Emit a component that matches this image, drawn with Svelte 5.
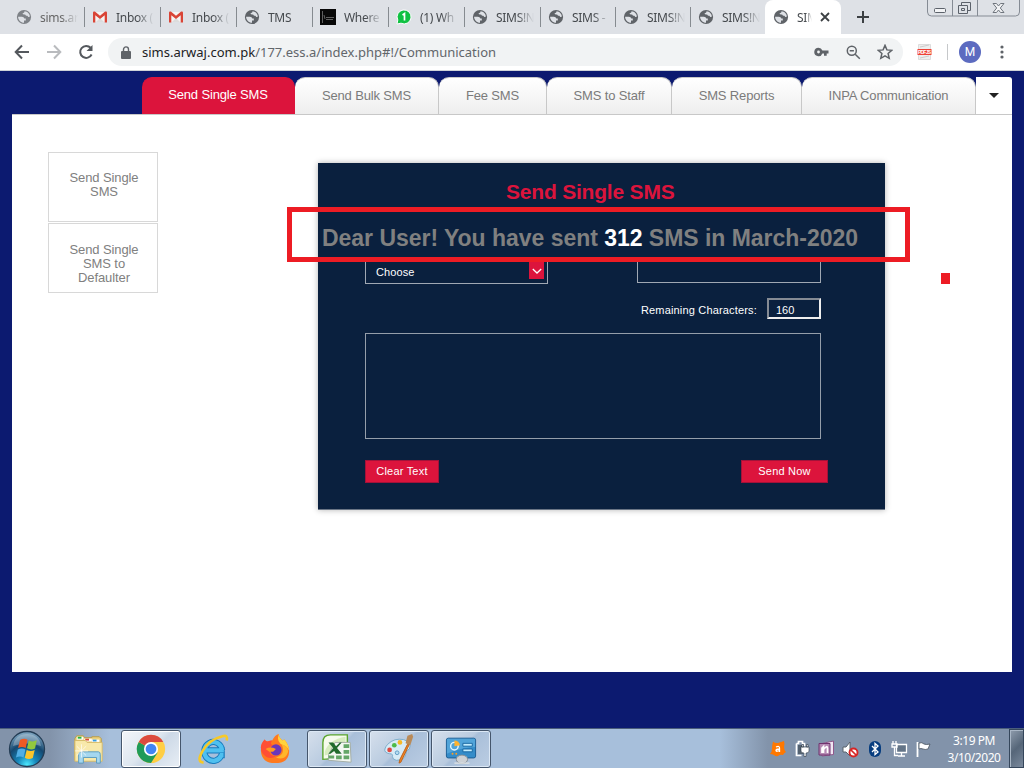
<script>
  const browserTabs = [
    { icon: 'globe', label: 'sims.ar', faded: true },
    { icon: 'gmail', label: 'Inbox (' },
    { icon: 'gmail', label: 'Inbox (' },
    { icon: 'globe', label: 'TMS' },
    { icon: 'photo', label: 'Where' },
    { icon: 'whatsapp', label: '(1) Wh' },
    { icon: 'globe', label: 'SIMS!N' },
    { icon: 'globe', label: 'SIMS -' },
    { icon: 'globe', label: 'SIMS!N' },
    { icon: 'globe', label: 'SIMS!N' },
    { icon: 'globe', label: 'SIM', active: true }
  ];
  const sections = [
    { label: 'Send Single SMS', width: 153, active: true },
    { label: 'Send Bulk SMS', width: 144 },
    { label: 'Fee SMS', width: 108 },
    { label: 'SMS to Staff', width: 125 },
    { label: 'SMS Reports', width: 130 },
    { label: 'INPA Communication', width: 174 }
  ];
</script>

{#snippet favicon(kind)}
  <svg class="fav" viewBox="0 0 16 16">
    {#if kind === 'globe'}
      <circle cx="8" cy="8" r="7.1" fill="#5f6368" />
      <path d="M8.6 2.2c2.9.2 5.1 2.5 5.3 5.4-.8.5-1.6.4-2-.2-.3-.7-.8-.7-1.5-.7-.8 0-.8-.9-1.4-1.1-.8-.2-1.8.2-2.3-.5-.4-.8.5-1.1 1.1-1.3.7-.2.4-1 .8-1.6z" fill="#dee1e6" />
      <path d="M2.1 7.7h3.7c1.4 0 2.4.8 2.5 1.9h1.5v1.8H8v2.3c-3.2 0-5.9-2.7-5.9-6z" fill="#dee1e6" />
    {:else if kind === 'gmail'}
      <path d="M2 3h12v10H2z" fill="#f5f3f2" />
      <path d="M4 13 8 9l4 4z" fill="#dcdcdc" />
      <path d="M1 3.8C1 2.4 2.3 2 3.2 2.8L8 6.8l4.800-4C13.7 2 15 2.400 15 3.800V13.500h-2.300V6.200L8 10.100 3.300 6.200v7.300H1z" fill="#d94436" />
    {:else if kind === 'photo'}
      <path d="M0 0h16v16H0z" fill="#080808" />
      <path d="M2.500 2v12M4 6l1 4M6 8.500h8M6 10.500h7" stroke="#777" stroke-width=".8" fill="none" />
    {:else}
      <path d="m1 15 .8-4A7 7 0 1 1 5 14.200z" fill="#10c143" stroke="#fff" stroke-width="1" />
      <path d="M6.500 6 8.500 4.600v7" fill="none" stroke="#fff" stroke-width="1.700" />
    {/if}
  </svg>
{/snippet}

<div class="screen">
  <header class="strip">
    <div class="tabs">
      {#each browserTabs as tab, i}
        <div class="tab" class:narrow={i > 6} class:active={tab.active} class:nosep={i === 9} class:dim={tab.faded}>
          {@render favicon(tab.icon)}
          <span class="tab-label">{tab.label}</span>
          {#if tab.active}
            <svg class="close" viewBox="0 0 10 10"><path d="m1 1 8 8M9 1 1 9" stroke="#3c4043" stroke-width="1.800" /></svg>
          {/if}
        </div>
      {/each}
    </div>
    <svg class="plus" viewBox="0 0 12 12"><path d="M6 0v12M0 6h12" stroke="#3c4043" stroke-width="2" /></svg>
    <svg class="winbtns" viewBox="0 0 94 18" fill="none">
      <path d="M.5 0v12q0 4 4 4h84q4 0 4-4V0M25.500 0v16M50.500 0v16" stroke="#858b94" />
      <rect x="7.500" y="8.500" width="11" height="4" rx="1" stroke="#5c626b" fill="#f2f3f5" />
      <path d="M34.500 2.500h9v8h-3M34.500 5V2.500M31.500 5.500h9v8h-9zM34.500 8.500h3v2h-3z" stroke="#5c626b" />
      <path d="M66 3.500h3.500l2 2.500 2-2.500H77l-3.700 4.500L77 12.500h-3.500l-2-2.500-2 2.500H66L69.700 8z" stroke="#70767e" fill="#f2f3f5" />
    </svg>
  </header>

  <div class="toolbar">
    <svg class="navico" viewBox="0 0 16 16"><path d="M15 8H2M8 1.500 1.700 8 8 14.500" /></svg>
    <svg class="navico off" viewBox="0 0 16 16"><path d="M1 8h13M8 1.500 14.300 8 8 14.500" /></svg>
    <svg class="navico" viewBox="0 0 16 16"><path d="M13.600 10.500A6 6 0 1 1 12.600 3.800" /><path d="M14.500 1v6h-6z" class="fill" /></svg>
    <div class="omnibox">
      <svg class="lock" viewBox="0 0 10 13"><path d="M1 5h8q1 0 1 1v6q0 1-1 1H1q-1 0-1-1V6q0-1 1-1z" fill="#5f6368" /><path d="M2.500 5V3.400a2.500 2.500 0 0 1 5 0V5" fill="none" stroke="#5f6368" stroke-width="1.400" /></svg>
      <span class="url">sims.arwaj.com.pk<span>/177.ess.a/index.php#!/Communication</span></span>
      <svg class="key" viewBox="0 0 15 10"><path d="M4.500.8a4.200 4.200 0 1 0 3.900 5.700H10v2.300h2.700V6.500H14.500V3.500H8.400A4.200 4.200 0 0 0 4.500.8zm0 2.800a1.400 1.400 0 1 1 0 2.800 1.400 1.400 0 0 1 0-2.800z" fill="#5f6368" fill-rule="evenodd" /></svg>
      <svg class="mag" viewBox="0 0 15 15"><circle cx="5.800" cy="5.800" r="4.500" /><path d="m9.200 9.200 4.600 4.600M3.700 5.800h4.200" /></svg>
      <svg class="star" viewBox="0 0 16 16"><path d="m8 1.400 1.900 4.500 4.900.4-3.700 3.200 1.100 4.800L8 11.800l-4.200 2.500 1.100-4.800-3.700-3.200 4.900-.4z" /></svg>
    </div>
    <svg class="pdf" viewBox="0 0 16 16">
      <path d="M1.500.5h12v15h-12z" fill="#eee" stroke="#ddd" /><path d="m3 3 9-2M3 14l9-2" stroke="#ccc" />
      <path d="M.5 5h14v6H.5z" fill="#ef4136" />
      <text x="1" y="9.800" font-size="5" font-weight="bold" fill="#fff" textLength="13" font-family="Liberation Sans, sans-serif">PDF JS</text>
    </svg>
    <i class="bar"></i>
    <span class="avatar">M</span>
    <svg class="dots" viewBox="0 0 4 14" fill="#5f6368"><circle cx="2" cy="2" r="1.600" /><circle cx="2" cy="7" r="1.600" /><circle cx="2" cy="12" r="1.600" /></svg>
  </div>

  <main>
    <nav>
      {#each sections as s}
        <div class="section" class:current={s.active} style:width="{s.width}px"><span>{s.label}</span></div>
      {/each}
      <div class="more"><i></i></div>
    </nav>
    <div class="content">
      <aside>
        <div class="side">Send Single<br />SMS</div>
        <div class="side">Send Single<br />SMS to<br />Defaulter</div>
      </aside>
      <section class="card">
        <h2>Send Single SMS</h2>
        <p class="count">Dear User! You have sent <b>312</b> SMS in March-2020</p>
        <div class="fields">
          <div class="select"><span>Choose</span><i><svg viewBox="0 0 10 6"><path d="m.8 1 4.200 4 4.200-4" fill="none" stroke="#fff" stroke-width="1.300" /></svg></i></div>
          <div class="input"></div>
        </div>
        <div class="remain"><span>Remaining Characters:</span><div class="num">160</div></div>
        <div class="message"></div>
        <div class="actions"><div class="btn clear">Clear Text</div><div class="btn send">Send Now</div></div>
        <div class="highlight"></div>
      </section>
    </div>
    <div class="mark"></div>
  </main>

  <footer>
    <svg class="orb" viewBox="0 0 38 38">
      <defs>
        <radialGradient id="orb" cx=".5" cy=".95" r=".9"><stop offset="0" stop-color="#4deaff" /><stop offset=".3" stop-color="#1788bc" /><stop offset=".65" stop-color="#154870" /><stop offset="1" stop-color="#79a1bd" /></radialGradient>
      </defs>
      <circle cx="19" cy="19" r="17.500" fill="url(#orb)" stroke="#243d55" stroke-width="1.300" />
      <path d="M5 16Q7 4 19 4t14 12q-14-5-28 0z" fill="#fff" opacity=".28" />
      <path d="M12 10q4-2.500 7.500-.3L17.700 18q-3.700-2-7.600 0z" fill="#ee5a24" />
      <path d="M20.800 10.500q4 2 8-.2L27 18.400q-4 2-8-.1z" fill="#91c83e" />
      <path d="M9.800 19.500q4-2 7.600-.1l-1.900 8q-3.700-1.800-7.500.2z" fill="#50aee5" />
      <path d="M18.700 20q4 2 8 0l-1.900 7.900q-4 2.300-8-.1z" fill="#fcc52b" />
    </svg>
    <div class="apps">
      <div class="app">
        <svg viewBox="0 0 34 34">
          <path d="M2 6 4 3h7l1 2h8V4h8l2 2v23H2z" fill="#ecd27e" stroke="#b89a45" />
          <path d="M4 4h7v3H4z" fill="#fff" /><path d="M5 4h4v2H5z" fill="#2bb43c" /><path d="M12 6h8v3h-8z" fill="#fff" /><path d="M13 6h4v2h-4z" fill="#d94b38" /><path d="M20 7h8v3h-8z" fill="#fff" /><path d="M21 7h4v2h-4z" fill="#379cdf" />
          <path d="M2 8h11l2 2h16v20H2z" fill="#f8e9ab" stroke="#d5ba68" />
          <path d="M6 32V23q0-3 3-3h18q2 0 2 3v9h-4v-6H11v6z" fill="#a5d7ef" stroke="#5a9abd" />
          <path d="M9 12v14M2 19h14M4 14l10 10M14 14 4 24" stroke="#fff" stroke-width=".7" />
        </svg>
      </div>
      <div class="app open front">
        <svg viewBox="0 0 34 34">
          <circle cx="17" cy="17" r="15" fill="#ffce44" />
          <path d="M17 17 4 9.500A15 15 0 0 0 17 32l7-11z" fill="#209b58" />
          <path d="M17 17 4 9.500A15 15 0 0 1 30 9.500H17z" fill="#dc4b3e" />
          <circle cx="17" cy="17" r="7.500" fill="#fff" /><circle cx="17" cy="17" r="5.700" fill="#4285f4" />
        </svg>
      </div>
      <div class="app">
        <svg viewBox="0 0 34 34" fill="none">
          <path d="M9 18.500h20.500M26.700 18.500A9.500 10 0 1 0 26 23.500h3.500" stroke="#177bbd" stroke-width="6.500" />
          <path d="M9 18.500h19.500M26.700 18.500A9.500 10 0 1 0 26 23.500h2.200" stroke="#4fc0f0" stroke-width="4.500" />
          <path d="M7 31.500Q-1 31 6 19T27 3.500q6-2 4.500 4.500" stroke="#f7c928" stroke-width="2.800" />
        </svg>
      </div>
      <div class="app">
        <svg viewBox="0 0 34 34">
          <path d="M6 7q1 2 3 2 3-1 5-1 3-6 7-7 0 4 4 7l2-1q5 6 5 12 0 13-15 13Q3 32 2 19q0-7 4-12z" fill="#ff7a1e" />
          <path d="M6 7q1 2 3 2 3-1 5-1-3 4 1 5-4 1-4 5 0 6 7 7-8 4-14-3Q-1 14 6 7z" fill="#ff4f35" />
          <path d="M21 1q0 4 4 7l2-1q5 6 5 12-2-5-6-6-8-3-5-12z" fill="#ffd43c" />
          <circle cx="18" cy="18" r="6" fill="#6b37ba" /><path d="M7 17q5-3 11 0l-3 3q-4 0-4 0z" fill="#ff9a22" />
          <path d="M24 12q5 11-6 14 10 4 13-6 0-6-7-8z" fill="#ffb62b" />
        </svg>
      </div>
      <div class="app open">
        <svg viewBox="0 0 34 34">
          <path d="M2 28V10q0-8 8-8h18v24z" fill="#f6fbec" stroke="#5ba52e" stroke-width="1.500" />
          <path d="M4 20q4-13 22-16v8q-10 10-22 12z" fill="#d7edbf" />
          <path d="M15 10h16l1 21-24-2v-6z" fill="#f4f8f2" stroke="#a2aca2" />
          <path d="M24 12h6v4h-6zM24 18h6v4h-6zM24 24h6v4h-6zM16 24h6v4h-6zM8 24h6v3H8z" fill="#64a767" />
          <path d="M8 10h5l3 4 4-4h2l-5 6 5 6h-6l-2-3-4 3H8l5-6z" fill="#216b2c" />
        </svg>
      </div>
      <div class="app open">
        <svg viewBox="0 0 34 34">
          <path d="M5 12Q12 5 22 7q9 3 6 10-4 1-4 6-1 6-10 6-4-1-4-4 1-3-3-3-6-1-5-5 1-3 3-5z" fill="#d7ebf6" stroke="#79abc9" />
          <circle cx="7" cy="18" r="2.500" fill="#df4940" /><circle cx="12" cy="13" r="2.500" fill="#4dba48" /><circle cx="18" cy="10" r="2.500" fill="#f7b927" /><circle cx="15" cy="21" r="2" fill="#b8ddf0" stroke="#5e9cc5" />
          <path d="M26 12h2L19 31l-2 1 1-4z" fill="#f08325" stroke="#ba611b" /><path d="m24 11 2-8 5-2 1 3-3 9z" fill="#b98a58" />
        </svg>
      </div>
      <div class="app open">
        <svg viewBox="0 0 34 34">
          <rect x="1.500" y="5.500" width="31" height="21" rx="2" fill="#348cc9" stroke="#195b91" />
          <path d="M2 6h30v9Q19 15 2 22z" fill="#66b4e5" opacity=".6" />
          <circle cx="10" cy="14" r="4" fill="none" stroke="#e2f5ff" stroke-width="1.500" /><path d="M10 14V8q5 0 6 5z" fill="#ffb22e" />
          <path d="M19 11h10v3H19zM19 17h10v3H19z" fill="#c2edff" stroke="#1565a0" /><circle cx="8" cy="22" r="1" fill="#ff9e21" /><circle cx="12" cy="22" r="1" fill="#ff9e21" />
          <ellipse cx="18" cy="28" rx="6" ry="4.500" fill="#cdd1d5" stroke="#858c92" /><path d="M10 32h16" stroke="#dce1e4" stroke-width="1.500" />
        </svg>
      </div>
    </div>
    <div class="tray">
      <svg viewBox="0 0 18 18"><path d="M4 1.500q2 2 5 1.500l6-2q1 3 0 6 0 3 2 5-2 1-3 3-3-1-5 1-2 1-4-1-2-1-4-1 2-2 2-5 0-4 1-7.500z" fill="#ff7800" /><path d="M7 7q3.500-1.500 3.500 1v4M10.500 9Q7 9 7 10.500t3.500 0" fill="none" stroke="#fff" stroke-width="1.300" /></svg>
      <svg viewBox="0 0 18 18"><path d="M3.500 3.500h2v-2h4v2h2v3M3.500 3.500v12h5" fill="none" stroke="#fff" stroke-width="1.700" /><path d="M5 5h5v9H5z" fill="#53616f" /><path d="M8 7h8v4q0 2-3 2v3.500h-2V13q-3 0-3-2zM9 4.500h1.500V7H9zM13.500 4.500H15V7h-1.500z" fill="#fff" stroke="#26333f" stroke-width=".6" /></svg>
      <svg viewBox="0 0 18 18"><path d="M5 3.500 16.500 1v13.500L5 16z" fill="#f1e6f3" stroke="#8f578b" /><path d="M2 3.500h11V15H2z" fill="#b58ab3" stroke="#71336f" /><path d="M5 13V8l1.500-1.500V13M6.500 9.500q4-5 4-1V13" fill="none" stroke="#fff" stroke-width="1.700" /></svg>
      <svg viewBox="0 0 18 18"><path d="M2 7h3l4-5v14l-4-4H2z" fill="#fff" stroke="#59636d" /><circle cx="12.500" cy="12.500" r="4" fill="#fff" stroke="#d62525" stroke-width="1.900" /><path d="m10 10 5 5" stroke="#d62525" stroke-width="1.700" /></svg>
      <svg viewBox="0 0 18 18"><rect x="3" y="1" width="12" height="16" rx="6" fill="#073d7f" /><path d="m6 6 6 6-3 2.500v-11L12 6l-6 6" fill="none" stroke="#fff" stroke-width="1.300" /></svg>
      <svg viewBox="0 0 18 18"><path d="M6.500 4.500h10v8h-10z" fill="#637487" stroke="#fff" stroke-width="1.300" /><path d="M8 16h7M11.500 13v3M3 1v3M6 1v3M2 4h5v3H2zM4.500 7v8.500H8" fill="none" stroke="#fff" stroke-width="1.300" /></svg>
      <svg viewBox="0 0 18 18"><path d="M3.500 2v15" stroke="#fff" stroke-width="1.800" /><path d="M5 3q3-1 5 1 2 1 6 0l-2 5q-3 1-5 0-2-1-4 0z" fill="#fff" stroke="#45515d" stroke-width=".8" /></svg>
    </div>
    <div class="clock"><span>3:19 PM</span><span>3/10/2020</span></div>
    <div class="peek"></div>
  </footer>
</div>

<style>
  :global(body) { margin: 0; overflow: hidden; }
  .screen, .screen * { box-sizing: border-box; }
  .screen { width: 1024px; height: 768px; display: flex; flex-direction: column; background: #0c1a70; font-family: "Liberation Sans", Arial, sans-serif; overflow: hidden; }
  svg { display: block; flex: none; }

  .strip { height: 34px; flex: none; display: flex; background: #dee1e6; padding-left: 9px; font: 12px "Noto Sans", sans-serif; color: #45494d; }
  .tabs { display: flex; }
  .tab { width: 76px; height: 34px; flex: none; display: flex; align-items: center; padding-left: 7px; background: linear-gradient(#868b90, #868b90) right 7px / 1px 20px no-repeat; }
  .tab.narrow { width: 75px; }
  .tab.nosep { background: none; }
  .tab.dim { color: #666; }
  .tab.dim .fav { opacity: .75; }
  .tab.active { background: #fff; border-radius: 8px 8px 0 0; width: 76px; margin-left: -1px; padding-left: 8px; }
  .fav { width: 16px; height: 16px; }
  .tab-label { width: 38px; margin-left: 8px; overflow: hidden; white-space: nowrap; letter-spacing: -.3px; mask-image: linear-gradient(90deg, #000 55%, transparent); }
  .active .tab-label { width: 15px; }
  .close { width: 10px; height: 10px; margin-left: 8px; }
  .plus { width: 12px; height: 12px; margin: 11px 0 0 16px; }
  .winbtns { width: 94px; height: 18px; margin-left: auto; margin-right: 3px; }

  .toolbar { height: 37px; flex: none; display: flex; align-items: center; background: #fff; border-bottom: 1px solid #cfd3d8; padding-left: 14px; }
  .navico { width: 16px; height: 16px; margin-right: 16px; fill: none; stroke: #54585d; stroke-width: 2; }
  .navico.off { stroke: #b9bbbe; }
  .navico .fill { fill: #54585d; stroke: none; }
  .omnibox { width: 795px; height: 28px; margin-left: -2px; border-radius: 14px; background: #f1f3f4; display: flex; align-items: center; padding: 0 10px 0 13px; }
  .lock { width: 10px; height: 13px; }
  .url { margin-left: 11px; font: 13px "Noto Sans", sans-serif; color: #202124; white-space: nowrap; }
  .url span { color: #62666b; }
  .key { width: 15px; height: 10px; margin-left: auto; }
  .mag { width: 15px; height: 15px; margin-left: 17px; fill: none; stroke: #5f6368; stroke-width: 1.5; }
  .star { width: 16px; height: 16px; margin-left: 16px; fill: none; stroke: #5f6368; stroke-width: 1.5; }
  .pdf { width: 16px; height: 16px; margin-left: 14px; }
  .bar { width: 1px; height: 16px; background: #c6c8ca; margin-left: 14px; }
  .avatar { width: 22px; height: 22px; border-radius: 50%; background: #5c6bc0; color: #fff; font: 12px/22px Roboto, sans-serif; text-align: center; margin-left: 11px; }
  .dots { width: 4px; height: 14px; margin-left: 19px; }

  main { flex: 1; padding: 6px 12px 56px; display: flex; flex-direction: column; position: relative; }
  nav { height: 38px; flex: none; display: flex; padding-left: 130px; }
  .section { height: 38px; padding-top: 10px; text-align: center; border: solid #c8c8c8; border-width: 1px 1px 1px 0; border-radius: 10px 10px 0 0; background: linear-gradient(#fff, #eee); color: #7b7b7b; font-size: 13px; line-height: 16px; letter-spacing: -.15px; white-space: nowrap; }
  .section.current { background: #dc143c; border-color: #dc143c; border-bottom-color: #c8c8c8; color: #fff; padding-top: 9px; }
  .more { width: 36px; border-bottom: 1px solid #c8c8c8; border-top-right-radius: 3px; background: #fff; display: flex; align-items: center; justify-content: center; }
  .more i { border: 5px solid transparent; border-top-color: #222; border-bottom: 0; }
  .content { flex: 1; background: #fff; margin-top: -1px; border-top: 1px solid #c8c8c8; display: flex; align-items: flex-start; padding: 37px 0 0 36px; }
  aside { width: 110px; display: flex; flex-direction: column; gap: 1px; }
  .side { height: 70px; border: 1px solid #d8d8d8; padding: 18px 0 0 2px; text-align: center; font-size: 13px; line-height: 14px; color: #808080; letter-spacing: -.1px; }
  .side + .side { padding-top: 19px; }
  .card { position: relative; width: 567px; height: 347px; margin: 11px 0 0 160px; background: #0a203e; border-bottom: 1px solid #6a7585; box-shadow: 0 0 6px rgba(0, 0, 0, .3); padding: 17px 0 0; font-size: 11px; color: #fff; }
  h2 { margin: 0 0 0 188px; font-size: 21px; line-height: 24px; color: #dc143c; letter-spacing: -.2px; white-space: nowrap; }
  .count { margin: 20px 0 0 4px; font-size: 23px; line-height: 28px; font-weight: bold; color: #808080; white-space: nowrap; letter-spacing: -.03px; }
  .count b { color: #fff; }
  .fields { display: flex; justify-content: space-between; padding: 5px 64px 0 47px; }
  .select { width: 183px; height: 27px; border: 1px solid #a0a8b3; display: flex; justify-content: space-between; padding: 0 3px 0 10px; }
  .select span { padding-top: 7px; line-height: 14px; letter-spacing: .1px; }
  .select i { width: 15px; height: 21px; background: #dc143c; display: flex; align-items: center; justify-content: center; padding-top: 5px; }
  .select svg { width: 10px; height: 6px; }
  .input { width: 184px; height: 26px; border: 1px solid #a0a8b3; }
  .remain { height: 21px; margin: 14px 64px 0 0; display: flex; justify-content: flex-end; align-items: center; gap: 10px; white-space: nowrap; }
  .remain span { padding-top: 3px; letter-spacing: .17px; }
  .num { width: 54px; height: 21px; border: 2px solid; border-color: #858b94 #eee #eee #858b94; padding: 4px 0 0 7px; line-height: 13px; }
  .message { height: 106px; margin: 14px 64px 0 47px; border: 1px solid #959eaa; }
  .actions { display: flex; justify-content: space-between; padding: 21px 57px 0 47px; }
  .btn { height: 23px; background: #dc143c; border: 1px solid #a31239; line-height: 21px; text-align: center; letter-spacing: .2px; }
  .clear { width: 74px; }
  .send { width: 87px; }
  .highlight { position: absolute; left: -31px; top: 44px; width: 623px; height: 55px; border: 5px solid #ed1c24; }
  .mark { position: absolute; left: 941px; top: 202px; width: 9px; height: 11px; background: #ed1c24; }

  footer { height: 40px; flex: none; display: flex; align-items: center; border-top: 1px solid #4b5e7b; background: linear-gradient(90deg, #8293aa 0, #8293aa 50px, #a7bfdb 110px, #a7bfdb 720px, #8293aa 768px); }
  .orb { width: 38px; height: 38px; margin-left: 8px; }
  .apps { display: flex; gap: 2px; margin-left: 13px; }
  .app { width: 60px; height: 38px; display: flex; align-items: center; justify-content: center; }
  .app svg { width: 32px; height: 32px; }
  .open { border: 1px solid #45566c; border-radius: 3px; background: linear-gradient(135deg, #d6e0ec, #b9cbe0 48%, #a9bfd9 52%, #bbcde3); box-shadow: inset 0 0 0 1px #dce8f5; }
  .front { background: linear-gradient(135deg, #f2f5f9, #dde6ef 45%, #cdd9e7 55%, #e8eef5); box-shadow: inset 0 0 0 1px #fff; }
  .tray { display: flex; gap: 6.200px; margin-left: auto; }
  .tray svg { width: 18px; height: 18px; }
  .clock { width: 60px; margin-left: 12px; display: flex; flex-direction: column; align-items: center; font: 12px/17px "Noto Sans", sans-serif; letter-spacing: -.45px; color: #fff; }
  .peek { width: 15px; height: 39px; margin-left: 5px; border: 1px solid #35465b; background: linear-gradient(135deg, #909dad, #566679 50%, #7a899c); box-shadow: inset 1px 1px #a9b6c5; }
</style>
